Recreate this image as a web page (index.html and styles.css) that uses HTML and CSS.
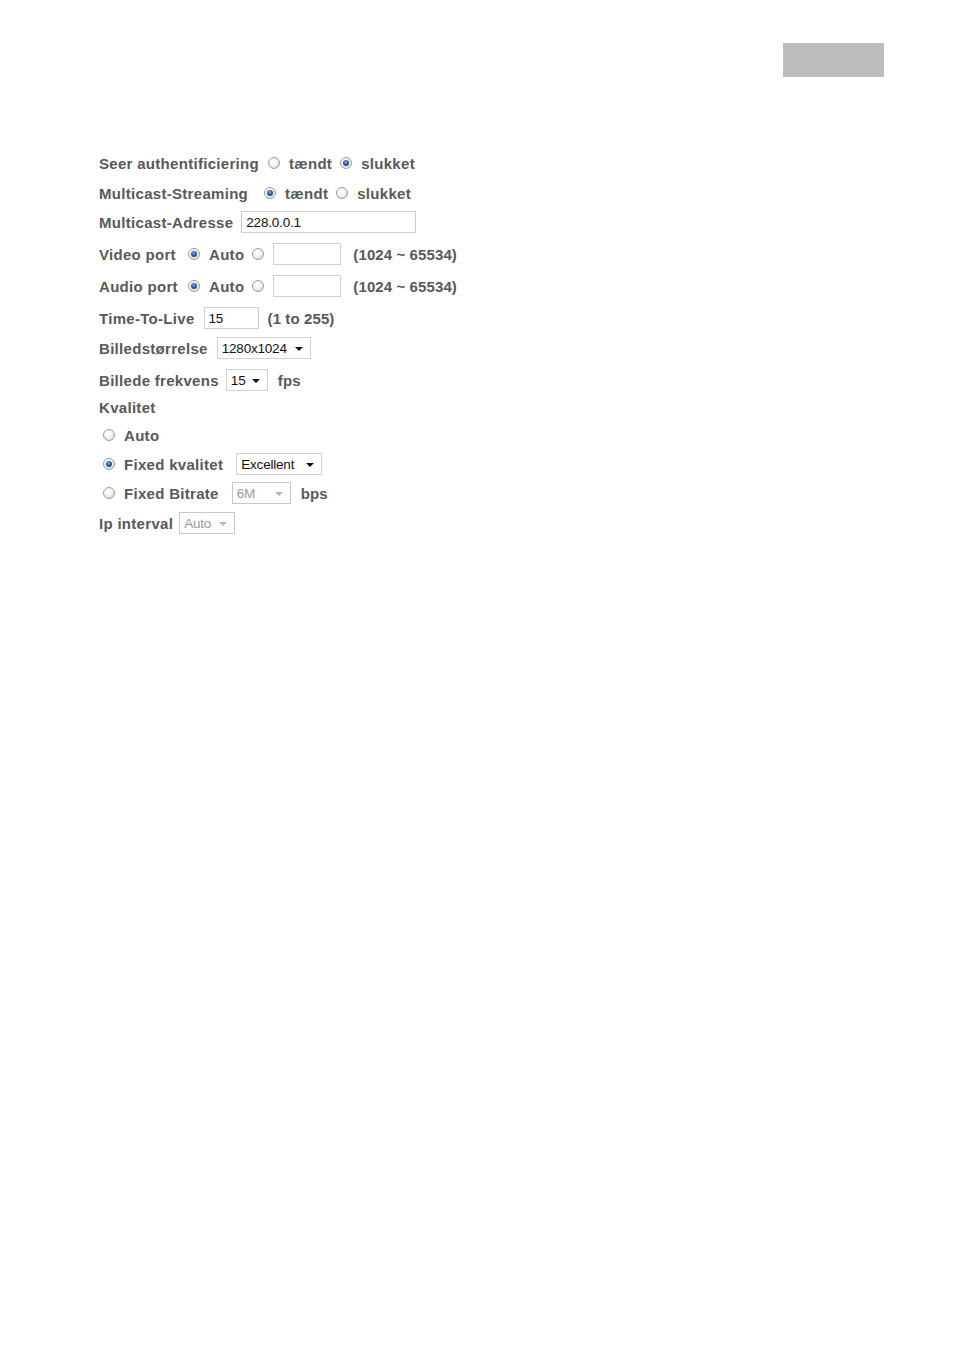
FILE: index.html
```html
<!DOCTYPE html>
<html lang="da">
<head>
<meta charset="utf-8">
<title>Multicast</title>
<link rel="stylesheet" href="styles.css">
</head>
<body>
<header class="top">
  <div class="tab"></div>
</header>
<form class="form">
  <div class="row first">
    <span class="lbl">Seer authentificiering</span>
    <span class="radio g9"></span><span class="opt">tændt</span>
    <span class="radio on g8"></span><span class="opt">slukket</span>
  </div>
  <div class="row m8">
    <span class="lbl">Multicast-Streaming</span>
    <span class="radio on g16"></span><span class="opt">tændt</span>
    <span class="radio g8"></span><span class="opt">slukket</span>
  </div>
  <div class="row m7">
    <span class="lbl">Multicast-Adresse</span>
    <span class="input w175 g8">228.0.0.1</span>
  </div>
  <div class="row m10">
    <span class="lbl port">Video port</span>
    <span class="radio on g13"></span><span class="opt">Auto</span>
    <span class="radio g8"></span>
    <span class="input w68 g9"></span>
    <span class="txt g12">(1024 ~ 65534)</span>
  </div>
  <div class="row m10">
    <span class="lbl port">Audio port</span>
    <span class="radio on g13"></span><span class="opt">Auto</span>
    <span class="radio g8"></span>
    <span class="input w68 g9"></span>
    <span class="txt g12">(1024 ~ 65534)</span>
  </div>
  <div class="row m10">
    <span class="lbl">Time-To-Live</span>
    <span class="input w55 g9">15</span>
    <span class="txt g9">(1 to 255)</span>
  </div>
  <div class="row m8">
    <span class="lbl">Billedstørrelse</span>
    <span class="select w94 g9"><span class="val">1280x1024</span><span class="caret"></span></span>
  </div>
  <div class="row m10">
    <span class="lbl">Billede frekvens</span>
    <span class="select w42 g7"><span class="val">15</span><span class="caret"></span></span>
    <span class="txt g10">fps</span>
  </div>
  <div class="row m5">
    <span class="lbl">Kvalitet</span>
  </div>
  <div class="row m6 indent">
    <span class="radio"></span><span class="opt">Auto</span>
  </div>
  <div class="row m7 indent">
    <span class="radio on"></span><span class="opt">Fixed kvalitet</span>
    <span class="select w86 g13"><span class="val">Excellent</span><span class="caret"></span></span>
  </div>
  <div class="row m7 indent">
    <span class="radio"></span><span class="opt">Fixed Bitrate</span>
    <span class="select w59 g13 disabled"><span class="val">6M</span><span class="caret"></span></span>
    <span class="txt g10">bps</span>
  </div>
  <div class="row m8">
    <span class="lbl">Ip interval</span>
    <span class="select w56 g6 disabled"><span class="val">Auto</span><span class="caret"></span></span>
  </div>
</form>
</body>
</html>
```

FILE: styles.css
```css
html, body {
  margin: 0;
  padding: 0;
  background: #ffffff;
}

body {
  width: 954px;
  min-height: 1350px;
  font-family: "Liberation Sans", Arial, sans-serif;
}

.top {
  display: flex;
  justify-content: flex-end;
  padding-top: 43px;
  padding-right: 70px;
}

.tab {
  width: 101px;
  height: 34px;
  background: #bebdbd;
}

.form {
  padding-left: 99px;
  margin: 0;
}

.row {
  display: flex;
  align-items: center;
  height: 22px;
  font-size: 15px;
  font-weight: bold;
  color: #58595b;
  letter-spacing: 0.3px;
  white-space: nowrap;
}

.row.first { margin-top: 75px; }
.m5 { margin-top: 5px; }
.m6 { margin-top: 6px; }
.m7 { margin-top: 7px; }
.m8 { margin-top: 8px; }
.m10 { margin-top: 10px; }

.indent { padding-left: 4px; }

.lbl.port { width: 76px; }

.g5 { margin-left: 5px; }
.g6 { margin-left: 6px; }
.g7 { margin-left: 7px; }
.g8 { margin-left: 8px; }
.g9 { margin-left: 9px; }
.g10 { margin-left: 10px; }
.g12 { margin-left: 12px; }
.g13 { margin-left: 13px; }
.g16 { margin-left: 16px; }

.radio {
  box-sizing: border-box;
  width: 12px;
  height: 12px;
  border-radius: 50%;
  border: 1px solid #9c9c9c;
  background: radial-gradient(circle at 40% 35%, #ffffff 0%, #f2f2f2 45%, #cfcfcf 100%);
  position: relative;
  flex: none;
}

.radio.on::after {
  content: "";
  position: absolute;
  left: 2px;
  top: 2px;
  width: 6px;
  height: 6px;
  border-radius: 50%;
  background: radial-gradient(circle at 45% 35%, #7fb2e0 0%, #2a5d97 45%, #16345c 100%);
}

.opt {
  margin-left: 9px;
}

.txt {
  letter-spacing: 0.1px;
}

.input,
.select {
  box-sizing: border-box;
  height: 22px;
  border: 1px solid #cfcfcf;
  background: #ffffff;
  font-weight: normal;
  font-size: 13.5px;
  letter-spacing: -0.2px;
  color: #111111;
  display: flex;
  align-items: center;
  padding-left: 4px;
  flex: none;
}

.select {
  justify-content: space-between;
  padding-right: 7px;
  border-color: #d2d2d2;
}

.caret {
  width: 0;
  height: 0;
  border-left: 4px solid transparent;
  border-right: 4px solid transparent;
  border-top: 4px solid #111111;
  margin-top: 1px;
}

.select.disabled {
  color: #9a9a9a;
  border-color: #c8c8c8;
}

.select.disabled .caret {
  border-top-color: #b5b5b5;
}

.w175 { width: 175px; }
.w68 { width: 68px; }
.w55 { width: 55px; }
.w94 { width: 94px; }
.w42 { width: 42px; }
.w86 { width: 86px; }
.w59 { width: 59px; }
.w56 { width: 56px; }
```
